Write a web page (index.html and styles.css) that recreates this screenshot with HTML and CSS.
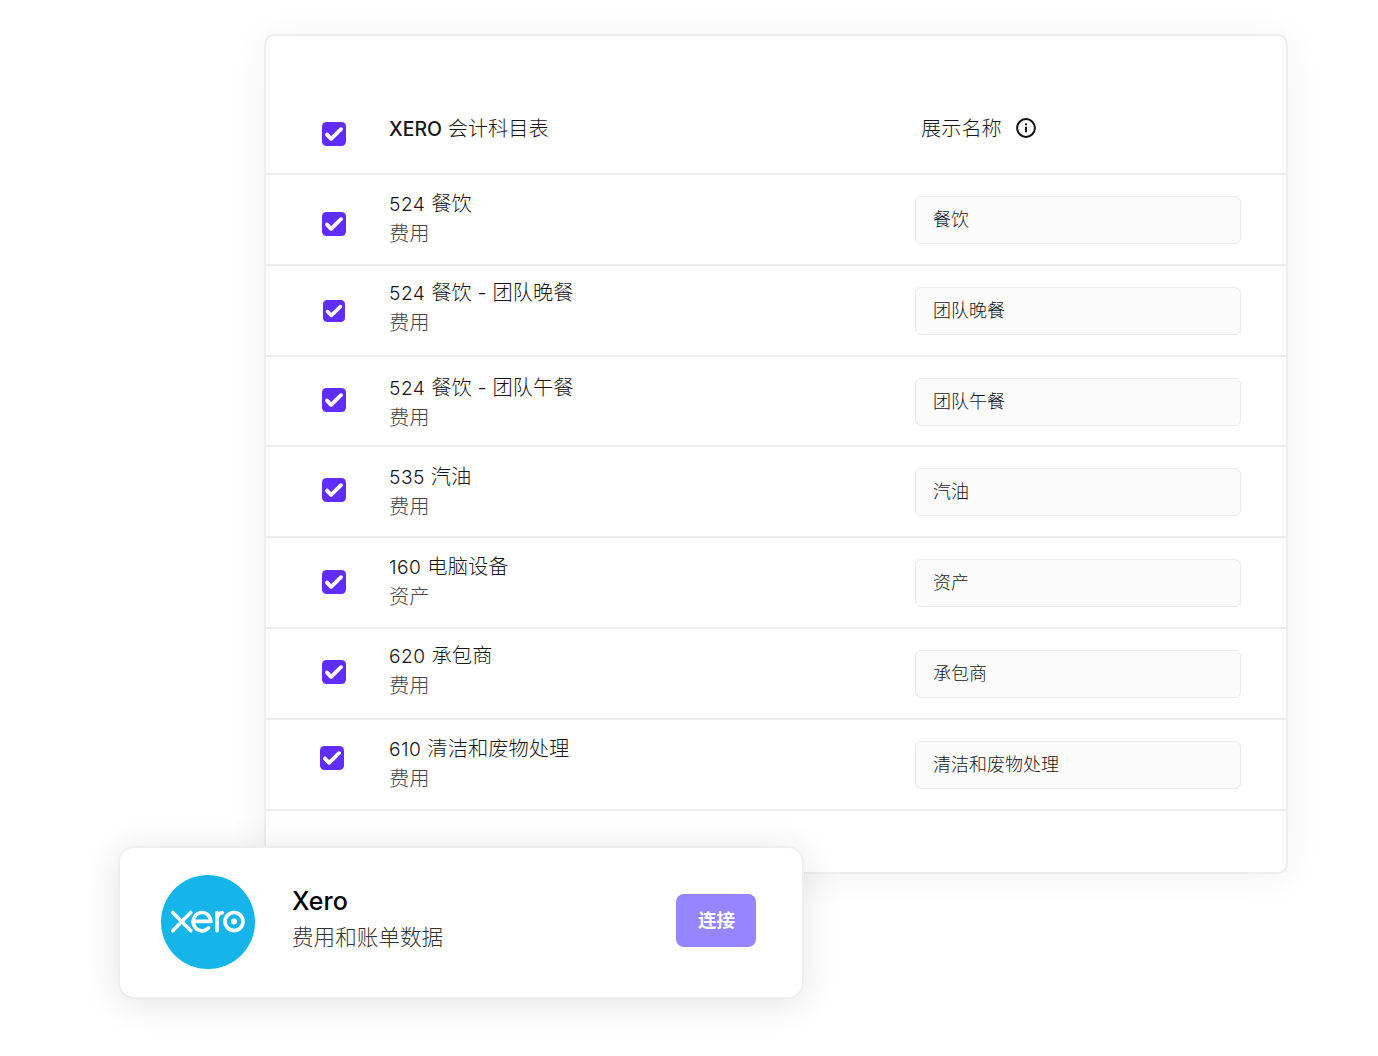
FILE: index.html
```html
<!DOCTYPE html>
<html lang="zh-CN">
<head>
<meta charset="utf-8">
<title>Xero</title>
<link rel="stylesheet" href="styles.css">
</head>
<body>
<svg class="sprite" aria-hidden="true">
  <symbol id="check" viewBox="0 0 24 24">
    <rect width="24" height="24" rx="4.5" fill="#5f2eff"/>
    <path d="M5 12.6L9.1 16.8L19 7.2" fill="none" stroke="#fff" stroke-width="3.9" stroke-linecap="round" stroke-linejoin="round"/>
  </symbol>
</svg>
<main class="stage">
  <section class="accounts">
    <header class="row row-head">
      <svg class="check"><use href="#check"/></svg>
      <h2 class="heading"><b>XERO</b> 会计科目表</h2>
      <div class="display-name">展示名称
        <svg class="info" viewBox="0 0 20 20"><circle cx="10" cy="10" r="8.9" fill="none" stroke="#111" stroke-width="2"/><circle cx="10" cy="6.3" r="1.15" fill="#111"/><path d="M10 8.7V14.3" stroke="#111" stroke-width="2"/></svg>
      </div>
    </header>
    <div class="row row-meals">
      <svg class="check"><use href="#check"/></svg>
      <div class="account"><p class="name"><span class="code">524 </span>餐饮</p><p class="type">费用</p></div>
      <div class="field">餐饮</div>
    </div>
    <div class="row row-dinner">
      <svg class="check"><use href="#check"/></svg>
      <div class="account"><p class="name"><span class="code">524 </span>餐饮 - 团队晚餐</p><p class="type">费用</p></div>
      <div class="field">团队晚餐</div>
    </div>
    <div class="row row-lunch">
      <svg class="check"><use href="#check"/></svg>
      <div class="account"><p class="name"><span class="code">524 </span>餐饮 - 团队午餐</p><p class="type">费用</p></div>
      <div class="field">团队午餐</div>
    </div>
    <div class="row row-fuel">
      <svg class="check"><use href="#check"/></svg>
      <div class="account"><p class="name"><span class="code">535 </span>汽油</p><p class="type">费用</p></div>
      <div class="field">汽油</div>
    </div>
    <div class="row row-computer">
      <svg class="check"><use href="#check"/></svg>
      <div class="account"><p class="name"><span class="code">160 </span>电脑设备</p><p class="type">资产</p></div>
      <div class="field">资产</div>
    </div>
    <div class="row row-contractor">
      <svg class="check"><use href="#check"/></svg>
      <div class="account"><p class="name"><span class="code">620 </span>承包商</p><p class="type">费用</p></div>
      <div class="field">承包商</div>
    </div>
    <div class="row row-cleaning">
      <svg class="check"><use href="#check"/></svg>
      <div class="account"><p class="name"><span class="code">610 </span>清洁和废物处理</p><p class="type">费用</p></div>
      <div class="field">清洁和废物处理</div>
    </div>
  </section>
  <aside class="connect">
    <svg class="logo" viewBox="0 0 94 94">
      <circle cx="47" cy="47" r="47" fill="#15b5ea"/>
      <g fill="none" stroke="#fff" stroke-width="3.6" stroke-linecap="round">
        <path d="M11.8 37.5L29.8 55.7M29.8 37.5L11.8 55.7"/>
        <path d="M33 46.4H49.8A8.8 9.2 0 1 0 47.5 52.9"/>
        <path d="M56 55.7V37.5M56 45.5C56 40 58 37.7 61.5 37.7"/>
        <circle cx="73" cy="46.5" r="9"/>
      </g>
      <circle cx="73" cy="46.5" r="3" fill="#fff"/>
    </svg>
    <div class="service"><h3>Xero</h3><p>费用和账单数据</p></div>
    <button class="button" type="button">连接</button>
  </aside>
</main>
</body>
</html>
```
FILE: styles.css
```css
* { box-sizing: border-box; }
body, h2, h3, p { margin: 0; }
body {
  background: #fff;
  color: #16161a;
  font-family: Inter, "Noto Sans CJK SC", sans-serif;
  font-weight: 300;
}
.sprite { position: absolute; width: 0; height: 0; }
.stage {
  position: relative;
  height: 1056px;
  padding: 34px 90px 0 264px;
  overflow: hidden;
}
.accounts {
  width: 1024px;
  height: 840px;
  border: 2px solid #eee;
  border-radius: 10px;
  background: #fff;
  box-shadow: 0 4px 36px rgba(0, 0, 0, 0.06);
}
.row {
  --check-top: 37px;
  --text-top: 14px;
  display: grid;
  grid-template-columns: 24px 485px 326px;
  column-gap: 42px;
  align-items: start;
  height: 91px;
  padding-left: 56px;
  border-bottom: 2px solid #eee;
}
.check {
  width: 24px;
  height: 24px;
  margin-top: var(--check-top);
}
.row-head { height: 139px; --check-top: 86px; }
.heading, .display-name {
  margin-top: 78px;
  font-size: 20.2px;
  line-height: 30px;
  font-weight: 300;
}
.heading { padding-left: 1px; }
.heading b {
  font-size: 19.5px;
  font-weight: 500;
}
.display-name {
  display: flex;
  align-items: center;
  gap: 14px;
  padding-left: 6px;
}
.info { width: 20px; height: 20px; margin-top: -2px; }
.account {
  padding: var(--text-top) 0 0 1px;
  line-height: 30px;
}
.name { font-size: 20.3px; }
.code { font-size: 19.2px; letter-spacing: 0.5px; }
.type { font-size: 20.3px; color: #45454a; }
.field {
  width: 326px;
  height: 48px;
  margin-top: 21px;
  padding-left: 17px;
  border: 1px solid #ebebeb;
  border-radius: 6px;
  background: #fbfbfb;
  font-size: 18px;
  line-height: 45px;
}
.row-dinner { --check-top: 34px; --text-top: 12px; }
.row-dinner .check { width: 22px; height: 22px; margin-left: 1px; }
.row-lunch { height: 90px; --check-top: 31px; --text-top: 16px; }
.row-fuel { --check-top: 31px; --text-top: 15px; }
.row-computer { --check-top: 32px; }
.row-contractor { --check-top: 31px; --text-top: 12px; }
.row-cleaning { --check-top: 26px; --text-top: 14px; }
.row-cleaning .check { margin-left: -2px; }
.connect {
  position: absolute;
  left: 118px;
  top: 846px;
  display: flex;
  align-items: center;
  width: 686px;
  height: 153px;
  padding: 0 46px 0 41px;
  border: 2px solid #eee;
  border-radius: 16px;
  background: #fff;
  box-shadow: 0 4px 36px rgba(0, 0, 0, 0.11);
}
.logo { width: 94px; height: 94px; margin-top: -1px; }
.service { flex: 1; margin-top: -9px; padding-left: 37px; }
.service h3 {
  font-size: 25px;
  line-height: 34px;
  font-weight: 500;
  color: #000;
}
.service p {
  margin-top: 3px;
  font-size: 21.6px;
  line-height: 32px;
  color: #333;
}
.button {
  width: 80px;
  height: 53px;
  margin-top: -4px;
  padding: 0 0 4px 1px;
  border: 0;
  border-radius: 8px;
  background: #9585ff;
  color: #fff;
  font: 700 18.5px "Noto Sans CJK SC", sans-serif;
}
```
